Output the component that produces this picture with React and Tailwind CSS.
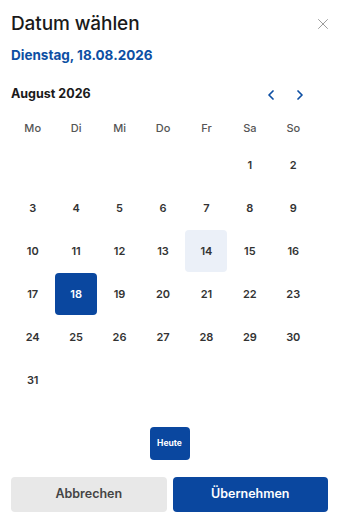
import { ChevronLeft, ChevronRight, X } from 'lucide-react';

const WEEKDAYS = ['Mo', 'Di', 'Mi', 'Do', 'Fr', 'Sa', 'So'];

// August 2026 starts on a Saturday -> 5 empty cells
const DAYS = [...Array(5).fill(null), ...Array.from({ length: 31 }, (_, i) => i + 1)];

export default function App() {
  const selected = 18;
  const today = 14;

  return (
    <div className="w-[342px] h-[525px] bg-white text-[#1a1a1a] font-['Inter',sans-serif] px-[11px] relative">
      {/* Header */}
      <div className="flex items-center justify-between pt-[11px] h-[36px]">
        <h1 className="text-[19px] font-medium leading-none tracking-[-0.1px]">Datum wählen</h1>
        <button className="text-[#9a9a9a] -mr-[1px]">
          <X size={18} strokeWidth={1.3} />
        </button>
      </div>
      <div className="mt-[13px] text-[13.5px] font-bold text-[#0d4fa3] leading-none">Dienstag, 18.08.2026</div>

      {/* Month nav */}
      <div className="flex items-center justify-between w-[304px] mt-[22px] h-[20px]">
        <span className="text-[12.5px] font-bold leading-none">August 2026</span>
        <div className="flex items-center gap-[13px] text-[#0d4fa3] mr-[7px]">
          <ChevronLeft size={16} strokeWidth={2.6} />
          <ChevronRight size={16} strokeWidth={2.6} />
        </div>
      </div>

      {/* Grid */}
      <div className="grid grid-cols-7 w-[304px] mt-[9px]">
        {WEEKDAYS.map(w => (
          <div key={w} className="h-[30px] flex items-center justify-center text-[11px] font-medium text-[#555]">{w}</div>
        ))}
        {DAYS.map((d, i) => (
          <div key={i} className="h-[43px] flex items-center justify-center">
            {d && (
              <div className={`w-[42px] h-[42px] rounded-[4px] flex items-center justify-center text-[11px] font-semibold ${
                d === selected ? 'bg-[#0a479f] text-white' : d === today ? 'bg-[#ebf0f8] text-[#333]' : 'text-[#333]'
              }`}>
                {d}
              </div>
            )}
          </div>
        ))}
      </div>

      {/* Heute */}
      <div className="flex justify-center w-[317px] mt-[25px]">
        <button className="w-[40px] h-[33px] rounded-[4px] bg-[#0a479f] text-white text-[8.5px] font-bold">Heute</button>
      </div>

      {/* Footer */}
      <div className="flex gap-[6px] w-[317px] mt-[17px]">
        <button className="flex-1 h-[35px] rounded-[4px] bg-[#e8e8e8] text-[#444] text-[12.5px] font-semibold">Abbrechen</button>
        <button className="flex-1 h-[35px] rounded-[4px] bg-[#0a479f] text-white text-[12.5px] font-semibold">Übernehmen</button>
      </div>
    </div>
  );
}
